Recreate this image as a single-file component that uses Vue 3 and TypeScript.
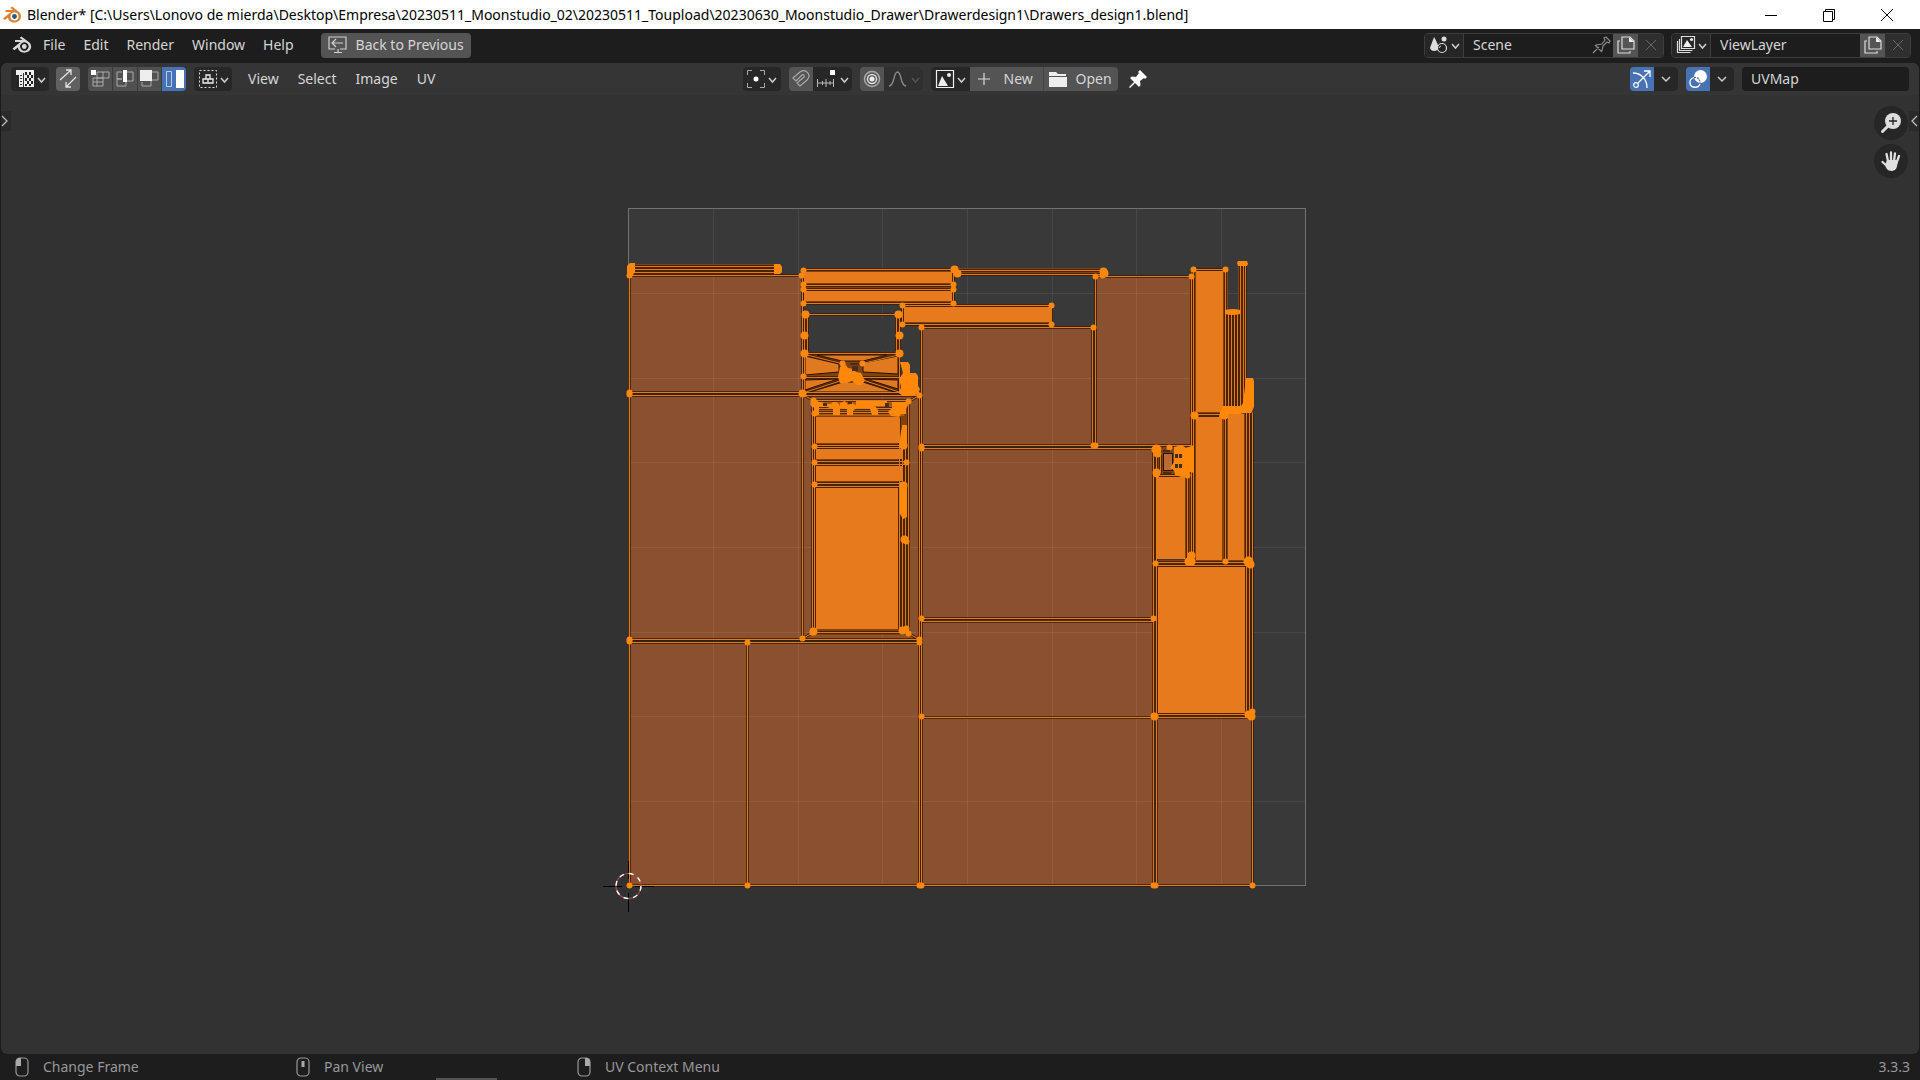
<script setup lang="ts">
import { ref } from 'vue'

type Rect = [x: number, y: number, w: number, h: number]
type Line = [x1: number, y1: number, x2: number, y2: number]
type Dot = [x: number, y: number, r: number]

const title =
  'Blender* [C:\\Users\\Lonovo de mierda\\Desktop\\Empresa\\20230511_Moonstudio_02\\20230511_Toupload\\20230630_Moonstudio_Drawer\\Drawerdesign1\\Drawers_design1.blend]'
const appMenus = ['File', 'Edit', 'Render', 'Window', 'Help']
const editorMenus = ['View', 'Select', 'Image', 'UV']
const scene = ref('Scene')
const viewLayer = ref('ViewLayer')
const uvMap = ref('UVMap')
const hints = [
  { key: 'left', label: 'Change Frame' },
  { key: 'middle', label: 'Pan View' },
  { key: 'right', label: 'UV Context Menu' }
]

const gridX = [713, 798, 882, 967, 1052, 1136, 1221]
const gridY = [293, 378, 462, 547, 632, 716, 801]

// Large faces
const faces: Rect[] = [
  [629, 275, 173, 117], [629, 395, 173, 244], [629, 642, 118, 243], [747, 642, 173, 243],
  [802, 395, 118, 244], [921, 717, 233, 168], [921, 620, 232, 97], [921, 448, 232, 170],
  [921, 327, 172, 119], [1095, 276, 96, 170], [1155, 716, 97, 169]
]

// Dense strips of thin faces
const strips: Rect[] = [
  [630, 264, 148, 11], [803, 268, 151, 35], [803, 314, 5, 39], [895, 314, 6, 39], [803, 352, 98, 41],
  [955, 268, 148, 7], [902, 304, 151, 21], [812, 400, 96, 235], [1191, 268, 5, 294], [1153, 448, 5, 270],
  [1222, 270, 6, 292], [1194, 410, 35, 10], [1226, 312, 14, 98], [1238, 264, 8, 146], [1244, 410, 9, 306],
  [1156, 560, 96, 7], [1156, 712, 96, 5], [1185, 474, 11, 88], [1153, 446, 41, 31]
]

// Small stacked faces, fully highlighted
const bright: Rect[] = [
  [805, 272, 147, 11], [805, 291, 147, 10], [904, 307, 147, 15],
  [816, 417, 83, 26], [816, 449, 87, 10], [816, 466, 87, 15], [816, 488, 82, 141],
  [1196, 271, 27, 141], [1196, 418, 26, 142], [1228, 414, 16, 146],
  [1157, 477, 28, 82], [1158, 567, 87, 146]
]
const brightShapes = [
  '805,356 839,364 839,372 805,375', '898,356 863,363 863,372 898,374',
  '817,355 887,355 863,361 842,361', '805,380 838,379 805,390', '898,380 866,379 898,389',
  '810,392 843,382 863,382 894,392'
]

const edges: Line[] = [
  [629, 275, 802, 275], [629, 275, 629, 885], [629, 392, 802, 392], [629, 395, 918, 395], [802, 270, 802, 638],
  [629, 639, 919, 639], [629, 642, 919, 642], [747, 642, 747, 885], [629, 885, 1252, 885],
  [919, 395, 919, 885], [921, 327, 921, 885], [921, 327, 1092, 327], [1092, 327, 1092, 446], [1095, 276, 1095, 446],
  [1095, 276, 1191, 276], [921, 445, 1191, 445], [921, 448, 1153, 448], [921, 618, 1153, 618], [921, 621, 1153, 621],
  [921, 717, 1252, 717], [1153, 448, 1153, 885], [1156, 474, 1156, 885], [1252, 564, 1252, 885],
  [630, 266, 778, 266], [630, 269, 778, 269], [630, 272, 778, 272],
  [803, 269, 953, 269], [803, 285, 953, 285], [803, 289, 953, 289], [803, 303, 953, 303], [804, 269, 804, 303], [953, 269, 953, 303],
  [956, 270, 1103, 270], [956, 274, 1103, 274],
  [902, 305, 1051, 305], [902, 324, 1051, 324], [902, 305, 902, 324], [1051, 305, 1051, 324],
  [805, 314, 898, 314], [804, 314, 804, 393], [807, 314, 807, 351], [896, 314, 896, 351], [899, 314, 899, 393],
  [804, 353, 900, 353], [804, 377, 842, 377], [862, 377, 900, 377], [802, 392, 919, 392],
  [804, 354, 841, 363], [900, 354, 862, 363], [804, 392, 841, 380], [900, 392, 864, 380],
  [802, 394, 813, 400], [919, 395, 908, 401], [802, 638, 813, 632], [919, 639, 908, 633],
  [813, 400, 908, 400], [812, 400, 812, 632], [814, 400, 814, 632], [908, 401, 908, 633], [813, 632, 908, 632],
  [814, 445, 904, 445], [814, 447, 904, 447], [814, 461, 906, 461], [814, 464, 906, 464], [814, 483, 904, 483], [814, 486, 904, 486],
  [899, 417, 899, 630], [902, 425, 902, 630], [905, 425, 905, 630],
  [814, 408, 904, 408], [814, 412, 904, 412],
  [1194, 269, 1225, 269], [1193, 269, 1193, 562], [1191, 276, 1191, 562], [1225, 269, 1225, 562], [1194, 414, 1226, 414], [1194, 417, 1240, 417],
  [1228, 312, 1228, 408], [1231, 312, 1231, 408], [1234, 312, 1234, 408], [1237, 312, 1237, 408],
  [1240, 264, 1240, 408], [1243, 264, 1243, 408], [1245, 264, 1245, 408],
  [1246, 412, 1246, 716], [1249, 412, 1249, 716], [1252, 412, 1252, 562],
  [1187, 476, 1187, 562], [1156, 475, 1188, 475], [1156, 562, 1250, 562], [1156, 565, 1250, 565], [1156, 714, 1252, 714],
  [1156, 449, 1156, 474], [1160, 449, 1160, 472]
]

const dots: Dot[] = [
  [629, 392, 3], [629, 394, 3], [629, 639, 3], [629, 641, 3], [629, 275, 3], [747, 642, 3], [747, 885, 3], [629, 885, 3], [919, 885, 3], [921, 885, 3],
  [919, 639, 3], [919, 642, 3], [802, 393, 4], [802, 638, 3], [801, 275, 3], [919, 395, 3], [921, 327, 3], [921, 446, 3], [921, 448, 3],
  [921, 618, 3], [921, 716, 3], [1153, 618, 3], [1154, 716, 4], [1153, 885, 3], [1155, 885, 3], [1252, 885, 3],
  [1093, 327, 3], [1093, 445, 3], [1095, 445, 3], [1095, 276, 3], [1191, 276, 3], [1103, 271, 4], [1104, 273, 4], [1102, 275, 3],
  [803, 270, 3], [803, 284, 3], [803, 289, 3], [803, 303, 3], [954, 269, 4], [957, 273, 4], [953, 284, 3], [953, 289, 3], [953, 303, 3],
  [902, 305, 3], [902, 324, 3], [1051, 305, 3], [1051, 324, 3],
  [805, 314, 4], [804, 335, 4], [804, 353, 4], [898, 314, 4], [899, 335, 4], [899, 353, 4], [803, 376, 3], [842, 363, 3], [862, 363, 3],
  [813, 400, 3], [908, 401, 3], [813, 631, 4], [812, 632, 3], [908, 633, 3], [902, 630, 4], [906, 628, 3],
  [814, 403, 4], [814, 413, 3], [814, 446, 3], [814, 462, 3], [814, 484, 3], [903, 445, 4], [906, 462, 3], [903, 485, 4], [904, 539, 4], [906, 541, 3],
  [1193, 269, 3], [1225, 269, 3], [1194, 415, 4], [1224, 415, 4],
  [1156, 449, 5], [1157, 453, 4], [1156, 472, 4], [1156, 474, 3], [1169, 447, 3], [1187, 475, 3],
  [1155, 563, 3], [1191, 555, 4], [1188, 561, 4], [1191, 561, 4], [1225, 561, 3], [1248, 561, 5], [1250, 564, 4], [1248, 714, 4], [1251, 716, 4], [1252, 711, 3]
]

// Vertices packed closely enough to merge into solid clusters
const clusters = [
  'M627 266l3-3h5v9l-4 6h-4z',
  'M774 264h6l2 3v5l-2 2h-6z',
  'M840 367l5-3 3 4 5 1 3 3 5 1 4 8-4 4h-5l-4-4-5 2h-7l-2-6z',
  'M900 362h8l2 3v8h6l2 3v10l2 3-2 5-6 2h-9l-4-3 2-6-2-8 4-6z',
  'M816 402l6 0 5 2 4 0 2-2h4l3 4v9h-7v-6l-6-2-8 0v8h-5v-12z',
  'M840 403l5-2 3 4 4-2 5 3 6-4h6l5 2v4h-18l-3 3v4h-6v-6l-7-1z',
  'M856 401h31v5h-31z',
  'M870 409l5-3 3 4v5h-6z',
  'M892 402h14l2 3-2 4v5h-5l-2 3-8-1-3-4 4-4z',
  'M902 425h5v23l-4 1-4-4z',
  'M900 482l7 2v33l-4 2-3-5z',
  'M1225 310q8-2 15 0v4q-7 2-15 0z',
  'M1238 261h9l1 3-1 2h-9l-1-3z',
  'M1246 378h7l1 3v26l-3 6h-7l-4 1h-15l-3 4-3-1 1-5 3-6h18l2-3z',
  'M1174 447l8-2 4 3 8-3v28l-4-1-3 5h-6l-6-2-1-5-4-2 4-6z'
]
// Gaps left between the packed vertices
const gaps: Rect[] = [
  [850, 363, 9, 2], [852, 366, 6, 5], [1175, 454, 3, 4], [1179, 454, 3, 4], [1175, 464, 3, 4], [1179, 464, 3, 4],
  [823, 403, 4, 3], [885, 403, 4, 5], [848, 402, 4, 2], [1163, 450, 7, 2], [1163, 472, 8, 2]
]
</script>

<template>
  <main class="app">
    <header class="titlebar">
      <svg class="logo" viewBox="0 0 20 18">
        <path d="M1 12.500 9 6H3.500V4H11L8.500 2l1.700-1.500 7 5.700C20 9 19.500 13.500 16 15.500c-4 2.300-9.500.5-10-4l-3.300 2.500z" fill="#dd7f2c" />
        <circle cx="12.500" cy="10.500" r="4" fill="#fff" /><circle cx="12.500" cy="10.500" r="2.400" fill="#265787" />
      </svg>
      <h1>{{ title }}</h1>
      <div class="window-buttons">
        <button aria-label="Minimize"><svg viewBox="0 0 14 14"><path d="M1 7.500h12" stroke="#000" /></svg></button>
        <button aria-label="Restore"><svg viewBox="0 0 14 14"><path d="M1.500 3.500h9v10h-9zM3.500 3.500v-2h9v10h-2" fill="none" stroke="#000" /></svg></button>
        <button aria-label="Close"><svg viewBox="0 0 14 14"><path d="M1 1l12 12M13 1 1 13" stroke="#000" /></svg></button>
      </div>
    </header>

    <nav class="topbar">
      <button class="bare blender" aria-label="Blender">
        <svg viewBox="0 0 20 18">
          <path fill-rule="evenodd" d="M.5 12.500 8.500 6H3V4h7.500L7.700 2l1.700-1.500 7.700 5.800c3 2.700 2.700 7-.7 9.200-4 2.500-10 .8-10.500-4l-3.600 2.800zM12.300 6.300a4.300 4.200 0 1 0 .1 0zM12.300 8.100a2.400 2.400 0 1 1-.1 0z" fill="#d8d8d8" />
        </svg>
      </button>
      <button v-for="item in appMenus" :key="item" class="bare menu">{{ item }}</button>
      <button class="back">
        <svg viewBox="0 0 20 18"><path d="M1 12V1h17v12h-6M7 13H1v-2M4 7h11M8 3 4 7l4 4M10 13v3M6 16.500h8" fill="none" stroke="#d0d0d0" stroke-width="1.200" /></svg>
        Back to Previous
      </button>
      <div class="spacer"></div>
      <div class="datablock">
        <button class="kind" aria-label="Browse scene">
          <svg class="wide" viewBox="0 0 31 20">
            <path d="M5 2c2 3 4 8 5 11-2 4-8 4-9 0C2 10 4 5 5 2z" fill="#ddd" /><circle cx="15" cy="4" r="2.500" fill="#ddd" />
            <circle cx="13" cy="13" r="4.500" fill="#232323" stroke="#ddd" stroke-width="1.200" /><path d="M10 13a3 3 0 0 1 2-2" fill="none" stroke="#ddd" />
            <path d="M23 9l3.500 4L30 9" fill="none" stroke="#ccc" stroke-width="1.500" />
          </svg>
        </button>
        <input v-model="scene" aria-label="Scene">
        <button class="dim pin" aria-label="Pin scene"><svg viewBox="0 0 20 20"><path d="M2 18l6-6M4 10l7 7M5 10l6-1 3-4-1-2 2-1 4 4-1 2-2-1-4 4-1 5" fill="none" stroke="#8c8c8c" stroke-width="1.200" /></svg></button>
        <button class="copy" aria-label="New scene"><svg viewBox="0 0 20 20"><path d="M6 2h8l4 4v8H6zM4 6H2v12h12v-2" fill="none" stroke="#ddd" stroke-width="1.200" /><path d="M13 2v5h5z" fill="#eee" /></svg></button>
        <button class="dim" aria-label="Remove scene"><svg viewBox="0 0 20 20"><path d="M5 5l10 10M15 5 5 15" stroke="#686868" /></svg></button>
      </div>
      <div class="datablock">
        <button class="kind" aria-label="Browse view layer">
          <svg class="wide" viewBox="0 0 31 20">
            <path d="M5.500 1.500h13v12h-13zM3.500 4v11.500h13M1.500 6v11.500h13" fill="none" stroke="#ddd" stroke-width="1.200" /><path d="M7 12l4-7 5 7z" fill="#eee" /><circle cx="15.500" cy="4.500" r="1.500" fill="#eee" />
            <path d="M23 9l3.500 4L30 9" fill="none" stroke="#ccc" stroke-width="1.500" />
          </svg>
        </button>
        <input v-model="viewLayer" aria-label="View layer">
        <button class="copy" aria-label="New view layer"><svg viewBox="0 0 20 20"><path d="M6 2h8l4 4v8H6zM4 6H2v12h12v-2" fill="none" stroke="#ddd" stroke-width="1.200" /><path d="M13 2v5h5z" fill="#eee" /></svg></button>
        <button class="dim" aria-label="Remove view layer"><svg viewBox="0 0 20 20"><path d="M5 5l10 10M15 5 5 15" stroke="#686868" /></svg></button>
      </div>
    </nav>

    <section class="editor">
      <div class="toolbar">
        <div class="side">
          <button class="tool dark" aria-label="Editor type">
            <svg class="wide" viewBox="0 0 31 20">
              <path d="M1 1h18v17H4V6H1z" fill="#eee" />
              <path d="M10 3h2v3h-2zM14 3h2v3h-2zM12 6h2v3h-2zM16 6h2v3h-2zM10 9h2v3h-2zM14 9h2v3h-2zM12 12h2v3h-2zM16 12h2v3h-2zM10 15h2v2h-2zM14 15h2v2h-2z" fill="#222" />
              <path d="M8.500 4v14M5 6.500h2M5 9.500h2M5 12.500h2M5 15.500h2" stroke="#333" />
              <path d="M23 9l3.500 4L30 9" fill="none" stroke="#ccc" stroke-width="1.500" />
            </svg>
          </button>
          <button class="tool light sync" aria-label="UV sync selection">
            <svg viewBox="0 0 20 20"><path d="M2 11 13 1M8 1h5v5M18 8 8 18M8 13v5h5" fill="none" stroke="#e4e4e4" stroke-width="1.300" /></svg>
          </button>
          <div class="group modes">
            <button aria-label="Vertex"><svg viewBox="0 0 20 20"><path d="M7 3h12v6H7zM3 9h10v8H3zM7 9v8M13 3v6M3 13h10" fill="none" stroke="#aaa" /><path d="M1 1h5v5H1z" fill="#fff" /></svg></button>
            <button aria-label="Edge"><svg viewBox="0 0 20 20"><path d="M7 3H2v7h5M2 10v7h9v-5M11 3h7v9h-7M2 10h5" fill="none" stroke="#aaa" /><path d="M8 1h4v12H8z" fill="#fff" /></svg></button>
            <button aria-label="Face"><svg viewBox="0 0 20 20"><path d="M13 3h6v8h-6M3 13v4h9v-5" fill="none" stroke="#aaa" /><path d="M1 1h12v11H1z" fill="#eee" /></svg></button>
            <button class="active" aria-label="Island"><svg viewBox="0 0 20 20"><path d="M2.500 2.500h5v15h-5z" fill="none" stroke="#b8cdf0" /><path d="M12 1h8v18h-8z" fill="#fff" /></svg></button>
          </div>
          <button class="tool dark" aria-label="Sticky selection">
            <svg class="wide" viewBox="0 0 31 20">
              <path d="M1.500 1.500h17v17h-17z" fill="none" stroke="#ddd" stroke-dasharray="2 2" /><path d="M8 6h4v4H8zM5 10h5v4H5zM10 10h5v4h-5z" fill="none" stroke="#eee" stroke-width="1.300" />
              <path d="M23 9l3.500 4L30 9" fill="none" stroke="#ccc" stroke-width="1.500" />
            </svg>
          </button>
          <div class="menus">
            <button v-for="item in editorMenus" :key="item" class="bare menu">{{ item }}</button>
          </div>
        </div>

        <div class="center">
          <button class="tool dark" aria-label="Pivot">
            <svg class="wide" viewBox="0 0 31 20">
              <path d="M1.500 6V1.500H6M14 1.500h4.500V6M18.500 14v4.500H14M6 18.500H1.500V14" fill="none" stroke="#aaa" /><circle cx="10" cy="10" r="2.500" fill="#fff" />
              <path d="M23 9l3.500 4L30 9" fill="none" stroke="#ccc" stroke-width="1.500" />
            </svg>
          </button>
          <div class="group pair">
            <button aria-label="Snap"><svg viewBox="0 0 20 20"><path d="M2 9l7-6c6-4 12 3 7 8l-7 6-3-3 7-6c1-2-1-3-2-2l-6 6z" fill="none" stroke="#aaa" stroke-width="1.200" /></svg></button>
            <button class="dark" aria-label="Snap target">
              <svg class="wide" viewBox="0 0 31 20">
                <path d="M0 14h17M.5 10v8M5.500 12v4M9 10v8M13 12v4M16.500 10v8" stroke="#bbb" fill="none" /><path d="M13 1h5v5h-5z" fill="#fff" />
                <path d="M24 9l3.500 4L31 9" fill="none" stroke="#ccc" stroke-width="1.500" />
              </svg>
            </button>
          </div>
          <div class="group pair">
            <button aria-label="Proportional editing"><svg viewBox="0 0 20 20"><circle cx="10" cy="10" r="7.500" fill="none" stroke="#aaa" stroke-width="1.500" /><circle cx="10" cy="10" r="4.500" fill="none" stroke="#ddd" stroke-width="1.500" /><circle cx="10" cy="10" r="2.500" fill="#eee" /></svg></button>
            <button class="faded" aria-label="Falloff">
              <svg class="wide" viewBox="0 0 31 20">
                <path d="M1 17c6 0 4-14 8.500-14S12 17 18 17" fill="none" stroke="#8c8c8c" stroke-width="1.300" /><path d="M24 9l3.500 4L31 9" fill="none" stroke="#555" stroke-width="1.500" />
              </svg>
            </button>
          </div>
          <div class="group image">
            <button class="dark" aria-label="Browse image">
              <svg class="wide" viewBox="0 0 31 20">
                <path d="M1.500 1.500h17v17h-17z" fill="none" stroke="#eee" stroke-width="1.200" /><path d="M3 17l4-10 6 10z" fill="#eee" /><circle cx="14" cy="6" r="2" fill="#eee" />
                <path d="M23 9l3.500 4L30 9" fill="none" stroke="#ccc" stroke-width="1.500" />
              </svg>
            </button>
            <button class="labelled"><svg viewBox="0 0 20 20"><path d="M10 4v12M4 10h12" stroke="#ddd" stroke-width="1.200" /></svg><span>New</span></button>
            <button class="labelled"><svg viewBox="0 0 20 20"><path d="M1 3h7l2 2h8v2H1zM1 8h18v10H1z" fill="#eee" /></svg><span>Open</span></button>
          </div>
          <button class="bare pushpin" aria-label="Pin image"><svg viewBox="0 0 20 20"><path d="M12 1l7 7-2 2-1-1-4 3 .5 4-1.500 2-4-4-5 5-1-1 5-5-4-4 2-1.500 4 .5 3-4-1-1z" fill="#fff" /></svg></button>
        </div>

        <div class="side end">
          <div class="group pair toggle">
            <button class="active" aria-label="Gizmos"><svg viewBox="0 0 20 20"><path d="M1 4c8 0 14 6 14 15M6 14 18 2M12 2h6v6" fill="none" stroke="#fff" stroke-width="1.300" /><circle cx="4" cy="16" r="2.300" fill="none" stroke="#fff" stroke-width="1.200" /></svg></button>
            <button class="dark" aria-label="Gizmo options"><svg viewBox="0 0 20 20"><path d="M6 8l4 4 4-4" fill="none" stroke="#ccc" stroke-width="1.500" /></svg></button>
          </div>
          <div class="group pair toggle">
            <button class="active" aria-label="Overlays"><svg viewBox="0 0 20 20"><circle cx="12.500" cy="7.500" r="6.500" fill="#fff" /><path d="M6 8.500c-3 1-4.500 3-4 6 1 5 9 5 10 0" fill="none" stroke="#fff" stroke-width="1.300" /><path d="M6 8.500c4-1 6 2 6 6" fill="none" stroke="#4772b3" stroke-width="1.300" stroke-dasharray="2 1" /></svg></button>
            <button class="dark" aria-label="Overlay options"><svg viewBox="0 0 20 20"><path d="M6 8l4 4 4-4" fill="none" stroke="#ccc" stroke-width="1.500" /></svg></button>
          </div>
          <input v-model="uvMap" class="uvmap" aria-label="Active UV map">
        </div>
      </div>

      <div class="viewport">
        <svg class="uv" viewBox="1 95 1918 959">
          <rect x="628.500" y="208.500" width="677" height="677" fill="#393939" />
          <rect v-for="(f, i) in faces" :key="'f' + i" :x="f[0]" :y="f[1]" :width="f[2]" :height="f[3]" fill="#8a5130" />
          <g stroke="#fff" stroke-opacity=".07">
            <path v-for="x in gridX" :key="'x' + x" :d="`M${x}.500 209v676`" />
            <path v-for="y in gridY" :key="'y' + y" :d="`M629 ${y}.500h676`" />
          </g>
          <rect x="628.500" y="208.500" width="677" height="677" fill="none" stroke="#727272" />
          <rect v-for="(s, i) in strips" :key="'s' + i" :x="s[0]" :y="s[1]" :width="s[2]" :height="s[3]" fill="#80430f" />
          <rect x="809" y="318" width="86" height="33" fill="#393939" />
          <rect x="816" y="401" width="88" height="15" fill="#ab5b12" />
          <g class="edge-shadow"><line v-for="(e, i) in edges" :key="i" :x1="e[0] + 0.5" :y1="e[1] + 0.5" :x2="e[2] + 0.5" :y2="e[3] + 0.5" /></g>
          <rect v-for="(b, i) in bright" :key="'b' + i" :x="b[0]" :y="b[1]" :width="b[2]" :height="b[3]" fill="#e67a1c" />
          <polygon v-for="(p, i) in brightShapes" :key="'p' + i" :points="p" fill="#e07a20" stroke="#2a1008" />
          <g class="edge"><line v-for="(e, i) in edges" :key="i" :x1="e[0] + 0.5" :y1="e[1] + 0.5" :x2="e[2] + 0.5" :y2="e[3] + 0.5" /></g>
          <rect x="1163.500" y="453.500" width="9" height="17" fill="#b76b35" stroke="#2a1008" />
          <g fill="#ff870a">
            <circle v-for="(d, i) in dots" :key="i" :cx="d[0] + 0.5" :cy="d[1] + 0.5" :r="d[2]" />
            <path v-for="(c, i) in clusters" :key="'c' + i" :d="c" />
          </g>
          <rect v-for="(g, i) in gaps" :key="'g' + i" :x="g[0]" :y="g[1]" :width="g[2]" :height="g[3]" fill="#4a2c18" />
          <path d="M603 886.500h19M635 886.500h19M628.500 861v18M628.500 893v19" stroke="#000" />
          <circle cx="628.500" cy="886" r="12.500" fill="none" stroke="#a8484c" stroke-width="1.200" />
          <circle cx="628.500" cy="886" r="12.500" fill="none" stroke="#fff" stroke-width="1.400" stroke-dasharray="4.900 4.900" />
        </svg>
        <button class="tab left" aria-label="Show toolbar"><svg viewBox="0 0 8 14"><path d="M0 2l5 5-5 5" fill="none" stroke="#bbb" stroke-width="1.300" /></svg></button>
        <button class="tab right" aria-label="Show sidebar"><svg viewBox="0 0 8 14"><path d="M7 2 2 7l5 5" fill="none" stroke="#bbb" stroke-width="1.300" /></svg></button>
        <div class="navigate">
          <button aria-label="Zoom"><svg viewBox="0 0 20 20"><circle cx="12" cy="8" r="8" fill="#ddd" /><path d="M7 13l-5.500 5.500" stroke="#ddd" stroke-width="3" stroke-linecap="round" /><path d="M12 4v8M8 8h8" stroke="#222" stroke-width="1.300" /></svg></button>
          <button aria-label="Pan"><svg viewBox="0 0 20 20"><path d="M7 10 5.500 3M10 9.500V1.500M13 10l1-7.500M15.500 12l2.500-7M6 15l-4.500-4" stroke="#e0e0e0" stroke-width="2.300" stroke-linecap="round" /><path d="M6 9h9l1.500 2c0 5-1.500 9-6 9-4 0-5.500-3-6.500-6z" fill="#e0e0e0" /></svg></button>
        </div>
      </div>
    </section>

    <footer class="statusbar">
      <div v-for="hint in hints" :key="hint.key" class="hint">
        <svg viewBox="0 0 14 20">
          <rect x="1" y="1" width="12" height="18" rx="4" fill="none" stroke="#999" stroke-width="1.200" />
          <path v-if="hint.key === 'left'" d="M1 9V5q0-4 4-4h1v8z" fill="#aaa" />
          <path v-else-if="hint.key === 'middle'" d="M5.500 4h3v6h-3z" fill="#aaa" />
          <path v-else d="M8 9V1h1q4 0 4 4v4z" fill="#aaa" />
        </svg>
        <span>{{ hint.label }}</span>
      </div>
      <span class="version">3.3.3</span>
      <i class="progress"></i>
    </footer>
  </main>
</template>

<style>
html, body, #app { height: 100%; }
body { margin: 0; background: #1b1b1b; }
</style>

<style scoped>
* { box-sizing: border-box; }
.app { height: 100%; display: flex; flex-direction: column; background: #1b1b1b; color: #d6d6d6; font: 14px/20px "Noto Sans", "Open Sans", sans-serif; overflow: hidden; }
button, input { font: inherit; color: inherit; border: 0; padding: 0; margin: 0; background: none; border-radius: 0; }
button { display: flex; align-items: center; justify-content: center; flex: none; white-space: nowrap; }
svg { display: block; flex: none; width: 20px; height: 20px; overflow: visible; }
svg.wide { width: 31px; }
.titlebar { height: 29px; flex: none; display: flex; align-items: center; background: #fff; color: #000; padding: 0 4px 0 2px; }
.titlebar .logo { width: 20px; height: 18px; margin-right: 5px; }
h1 { margin: 0; font: 400 14px/20px "Noto Sans", "Open Sans", sans-serif; white-space: nowrap; flex: 1; }
.window-buttons { display: flex; }
.window-buttons button { width: 58px; height: 29px; }
.window-buttons svg { width: 14px; height: 14px; }
.topbar { height: 34px; flex: none; display: flex; align-items: center; padding: 0 9px 2px 12px; background: #1d1d1d; }
.blender { margin-right: 2px; }
.topbar .menu { padding: 0 9px; }
.back { height: 25px; width: 150px; margin-left: 18px; gap: 8px; background: #545454; border-radius: 4px; }
.spacer { flex: 1; }
.datablock { display: flex; height: 25px; width: 240px; border: 1px solid #3d3d3d; border-radius: 4px; background: #1d1d1d; margin-left: 7px; overflow: hidden; }
.datablock button { width: 25px; height: 23px; }
.datablock .kind { width: 39px; background: #262626; border-right: 1px solid #3d3d3d; }
.datablock input { flex: 1; min-width: 0; padding-left: 9px; }
.datablock .copy { background: #545454; }
.datablock .dim { background: #2f2f2f; }
.datablock .pin { background: none; }
.editor { flex: 1; min-height: 0; display: flex; flex-direction: column; margin: 0 1px; background: #323232; border-radius: 6px; overflow: hidden; }
.toolbar { height: 32px; flex: none; display: flex; align-items: center; padding: 0 10px 1px; background: #353535; }
.side { flex: 1 1 0; display: flex; align-items: center; }
.end { justify-content: flex-end; gap: 8px; }
.tool { width: 38px; height: 24px; border-radius: 4px; }
.dark, .group .dark { background: #272727; }
.light { background: #606060; }
.sync { width: 24px; margin: 0 8px 0 7px; }
.group { display: flex; height: 24px; border-radius: 4px; overflow: hidden; background: #545454; }
.modes { width: 98px; margin-right: 8px; gap: 1px; background: #3b3b3b; }
.modes button { flex: 1; background: #505050; }
.group .active { background: #4772b3; }
.menus { display: flex; gap: 1px; margin-left: 7px; }
.menus .menu { padding: 0 9px; }
.center { display: flex; align-items: center; gap: 8px; margin-right: 30px; }
.pair button { width: 24px; }
.pair .dark, .pair .faded { width: 39px; }
.pair .faded { background: #303030; }
.toggle .dark { width: 24px; }
.image .dark { width: 39px; }
.image .labelled { width: 74px; gap: 10px; padding-left: 4px; justify-content: flex-start; border-right: 1px solid #454545; }
.image .labelled:last-child { gap: 8px; border: 0; }
.pushpin { margin-left: 2px; }
.uvmap { width: 167px; height: 24px; padding-left: 9px; border-radius: 4px; background: #1d1d1d; }
.viewport { flex: 1; min-height: 0; position: relative; }
.uv { width: 100%; height: 100%; }
.edge-shadow { stroke: #3a1802; stroke-width: 3px; stroke-opacity: .75; }
.edge { stroke: #e07d1a; stroke-width: 1px; }
.tab { position: absolute; top: 16px; width: 10px; height: 20px; background: #2a2a2a; }
.tab svg { width: 8px; height: 14px; }
.left { left: 0; }
.right { right: 0; }
.navigate { position: absolute; top: 11px; right: 11px; display: flex; flex-direction: column; gap: 4px; }
.navigate button { width: 34px; height: 34px; border-radius: 50%; background: #262626; }
.statusbar { height: 26px; flex: none; position: relative; display: flex; align-items: center; padding: 0 10px 0 15px; background: #1d1d1d; color: #989898; }
.hint { width: 281px; display: flex; align-items: center; gap: 14px; }
.hint svg { width: 14px; }
.version { margin-left: auto; }
.progress { position: absolute; left: 436px; bottom: 0; width: 61px; height: 2px; background: #545454; }
</style>
